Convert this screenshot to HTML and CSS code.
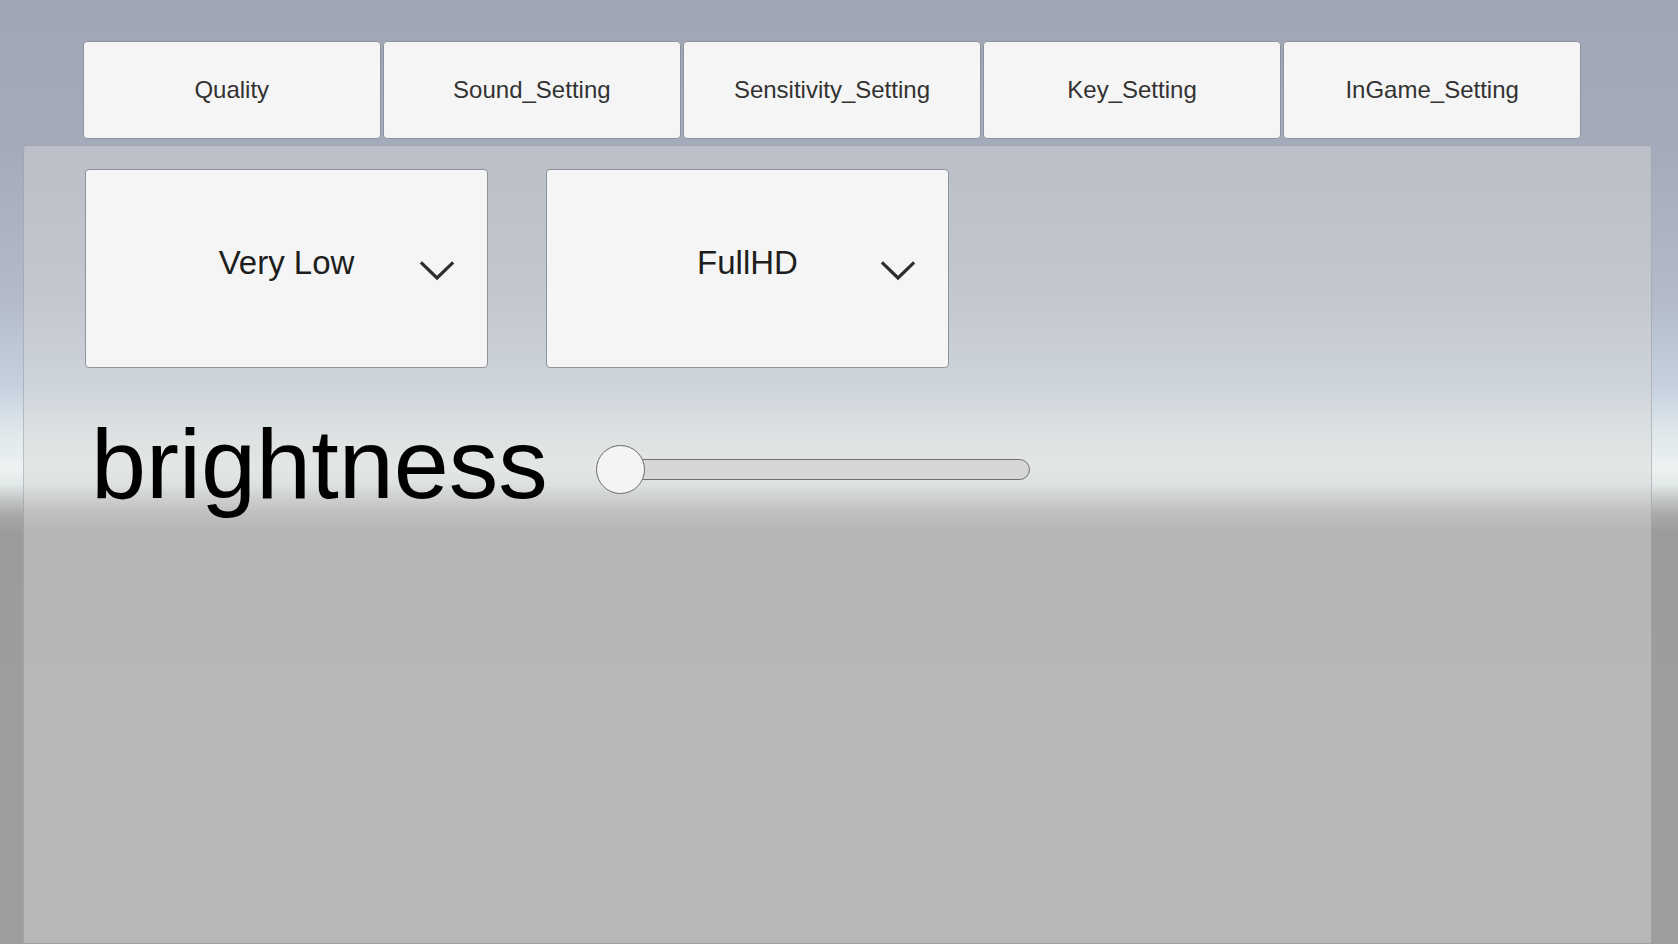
FILE: index.html
```html
<!DOCTYPE html>
<html lang="en">
<head>
<meta charset="utf-8">
<title>Settings</title>
<link rel="stylesheet" href="styles.css">
</head>
<body>
<div class="scene">
  <nav class="tabs">
    <div class="tab">Quality</div>
    <div class="tab">Sound_Setting</div>
    <div class="tab">Sensitivity_Setting</div>
    <div class="tab">Key_Setting</div>
    <div class="tab">InGame_Setting</div>
  </nav>
  <section class="panel">
    <div class="dropdowns">
      <div class="dropdown">
        <span class="dd-label">Very Low</span>
        <svg class="chevron" width="34" height="20" viewBox="0 0 34 20"><path d="M2 2.5 L17 17 L32 2.5" fill="none" stroke="#2e2e2e" stroke-width="3.2" stroke-linecap="square" stroke-linejoin="miter"/></svg>
      </div>
      <div class="dropdown">
        <span class="dd-label">FullHD</span>
        <svg class="chevron" width="34" height="20" viewBox="0 0 34 20"><path d="M2 2.5 L17 17 L32 2.5" fill="none" stroke="#2e2e2e" stroke-width="3.2" stroke-linecap="square" stroke-linejoin="miter"/></svg>
      </div>
    </div>
    <div class="bright-row">
      <div class="bright-label">brightness</div>
      <div class="slider">
        <div class="track"></div>
        <div class="handle"></div>
      </div>
    </div>
  </section>
</div>
</body>
</html>
```
FILE: styles.css
```css
html, body {
  margin: 0;
  padding: 0;
  width: 1678px;
  height: 944px;
  overflow: hidden;
}
body {
  font-family: "Liberation Sans", Arial, sans-serif;
  background: linear-gradient(to bottom,
    #a0a6b6 0px,
    #a4abbb 150px,
    #b3bbca 300px,
    #c6d0df 385px,
    #dde7ea 430px,
    #edf1f1 468px,
    #e2e9e9 484px,
    #c3c5c5 500px,
    #a9a9a8 515px,
    #9d9c9b 532px,
    #9f9e9d 800px,
    #9e9d9c 944px);
}
.scene {
  width: 1678px;
  height: 944px;
  display: flex;
  flex-direction: column;
}
.tabs {
  display: flex;
  gap: 2.6px;
  padding: 41px 0 0 83px;
}
.tab {
  box-sizing: border-box;
  width: 297.5px;
  height: 98px;
  background: #f5f5f5;
  border: 1px solid #8d929c;
  border-radius: 4px;
  display: flex;
  align-items: center;
  justify-content: center;
  font-size: 24px;
  color: #323232;
}
.panel {
  box-sizing: border-box;
  margin: 6px 0 0 23px;
  width: 1629px;
  height: 799px;
  background: rgba(216, 216, 216, 0.44);
  border: 1px solid rgba(120, 122, 128, 0.35);
  border-radius: 4px 4px 0 0;
  padding: 23px 0 0 61px;
}
.dropdowns {
  display: flex;
  gap: 58px;
}
.dropdown {
  position: relative;
  box-sizing: border-box;
  width: 403px;
  height: 199px;
  background: #f5f5f5;
  border: 1px solid #8d929c;
  border-radius: 4px;
  display: flex;
  align-items: center;
  justify-content: center;
  padding-bottom: 12px;
}
.dd-label {
  font-size: 33px;
  color: #1e1e1e;
}
.chevron {
  position: absolute;
  right: 33px;
  top: 91px;
}
.bright-row {
  display: flex;
  align-items: flex-start;
  margin-top: 46px;
}
.bright-label {
  margin-left: 6px;
  font-size: 99px;
  line-height: 100px;
  color: #000;
}
.slider {
  position: relative;
  margin: 31px 0 0 48px;
  width: 434px;
  height: 49px;
}
.track {
  position: absolute;
  left: 12px;
  right: 0;
  top: 14px;
  height: 21px;
  box-sizing: border-box;
  background: #d6d6d6;
  border: 1.5px solid #707070;
  border-radius: 11px;
}
.handle {
  position: absolute;
  left: 0;
  top: 0;
  width: 49px;
  height: 49px;
  box-sizing: border-box;
  border-radius: 50%;
  background: #f4f4f4;
  border: 1.5px solid #6a6a6a;
}
```
